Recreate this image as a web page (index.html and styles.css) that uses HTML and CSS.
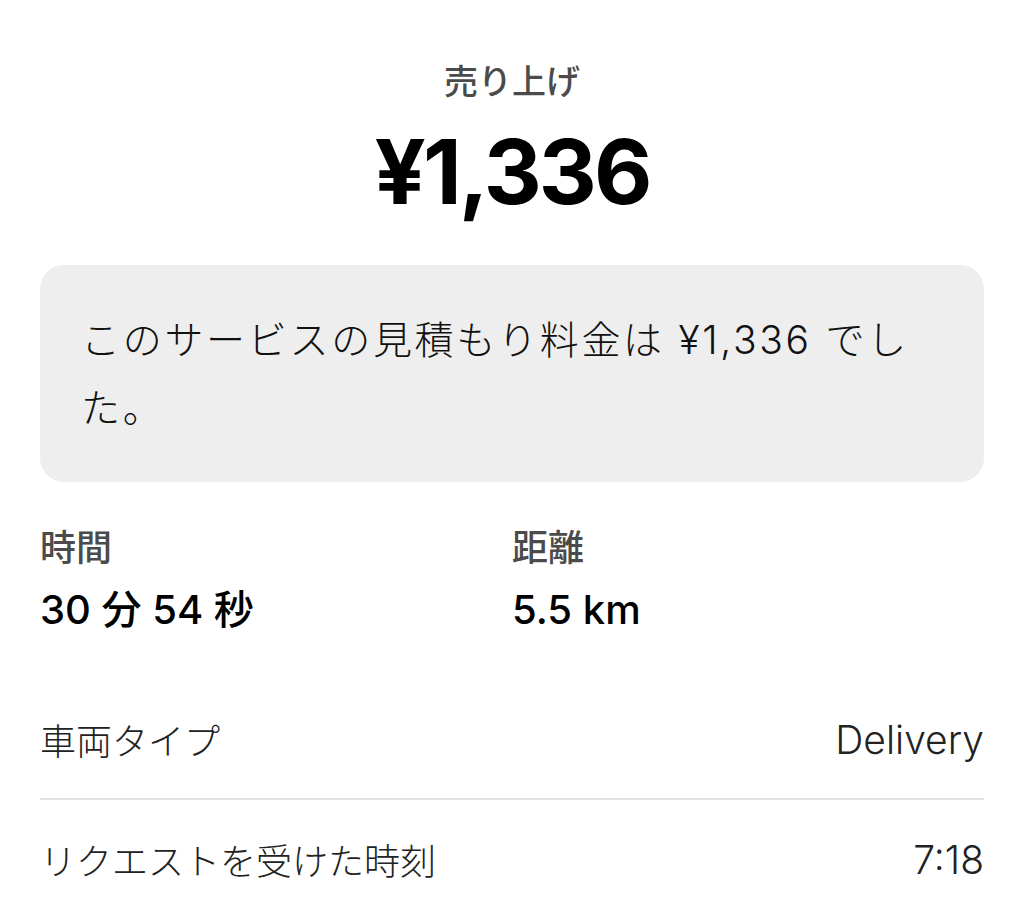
FILE: index.html
```html
<!DOCTYPE html>
<html lang="ja">
<head>
  <meta charset="UTF-8">
  <title>売り上げ</title>
  <link rel="stylesheet" href="styles.css">
</head>
<body>
  <div class="trip">
    <div class="earnings">
      <div class="earnings-label">売り上げ</div>
      <div class="earnings-amount">¥1,336</div>
    </div>

    <div class="notice">
      このサービスの見積もり料金は ¥1,336 でした。
    </div>

    <div class="stats">
      <div class="stat">
        <div class="stat-label">時間</div>
        <div class="stat-value">30 分 54 秒</div>
      </div>
      <div class="stat">
        <div class="stat-label">距離</div>
        <div class="stat-value">5.5 km</div>
      </div>
    </div>

    <div class="details">
      <div class="detail-row">
        <span class="detail-name">車両タイプ</span>
        <span class="detail-value">Delivery</span>
      </div>
      <div class="detail-row">
        <span class="detail-name">リクエストを受けた時刻</span>
        <span class="detail-value">7:18</span>
      </div>
    </div>
  </div>
</body>
</html>
```

FILE: styles.css
```css
:root {
  --text: #111;
  --muted: #4b4b4b;
  --panel: #eeeeee;
  --line: #e2e2e2;
}

body {
  margin: 0;
  background: #fff;
  color: var(--text);
  font-family: Inter, "Noto Sans CJK JP", sans-serif;
}

.trip {
  padding: 62px 40px 0;
}

.earnings {
  text-align: center;
}

.earnings-label {
  font-size: 34px;
  line-height: 40px;
  font-weight: 500;
  color: var(--muted);
}

.earnings-amount {
  margin-top: 20px;
  font-size: 90px;
  line-height: 100px;
  font-weight: 700;
  letter-spacing: -3px;
  color: #000;
}

.notice {
  margin-top: 43px;
  background: var(--panel);
  border-radius: 24px;
  padding: 41px 41px 40px;
  font-size: 39px;
  line-height: 68px;
  letter-spacing: 2.7px;
  font-weight: 300;
}

.stats {
  display: grid;
  grid-template-columns: 1fr 1fr;
  margin-top: 46px;
}

.stat-label {
  font-size: 36px;
  line-height: 40px;
  font-weight: 500;
  color: var(--muted);
}

.stat-value {
  margin-top: 20px;
  font-size: 40px;
  line-height: 44px;
  font-weight: 500;
  color: #000;
}

.details {
  margin-top: 48px;
}

.detail-row {
  display: flex;
  justify-content: space-between;
  align-items: center;
  height: 118px;
  font-size: 36px;
  font-weight: 300;
  color: #222;
}

.detail-value {
  font-size: 39px;
}

.detail-row + .detail-row {
  border-top: 2px solid var(--line);
}
```
